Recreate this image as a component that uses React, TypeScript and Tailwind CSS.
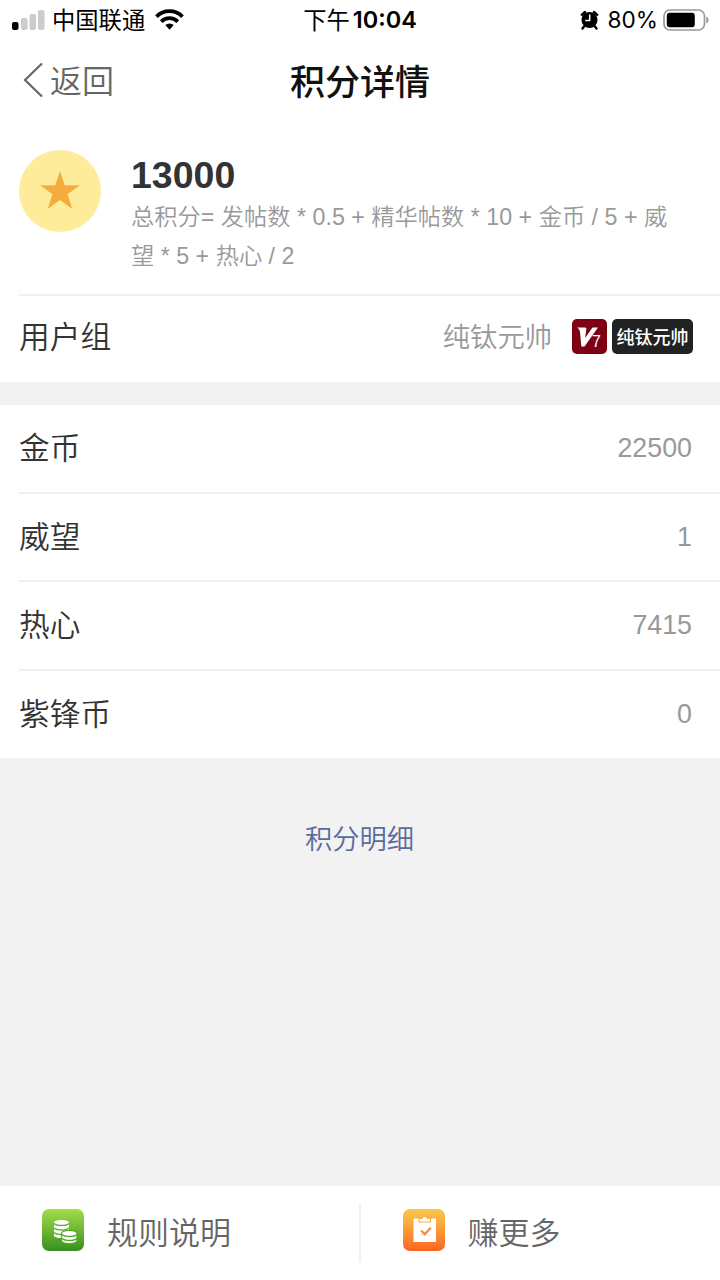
import type { ReactNode } from "react";

const balances = [
  { label: "金币", value: 22500 },
  { label: "威望", value: 1 },
  { label: "热心", value: 7415 },
  { label: "紫锋币", value: 0 },
];

export default function App() {
  return (
    <div className="flex h-[1280px] w-[720px] flex-col overflow-hidden bg-[#f2f2f2] font-['Liberation_Sans','Noto_Sans_CJK_SC',sans-serif] font-[350] text-[#333]">
      <div className="bg-white">
        <StatusBar />
        <NavBar />
        <PointsSummary />
        <UserGroupRow />
      </div>

      <div className="mt-[23px] bg-white">
        {balances.map((item, i) => (
          <div key={item.label} className="pl-[19px]">
            <div
              className={
                i < balances.length - 1
                  ? "flex h-[88.7px] items-center justify-between border-b-2 border-[#f0f0f0] pr-7"
                  : "flex h-[86.9px] items-center justify-between pr-7"
              }
            >
              <span className="pt-[2px] text-[30.7px] leading-none">{item.label}</span>
              <span className="text-[26.8px] leading-none text-[#999]">{item.value}</span>
            </div>
          </div>
        ))}
      </div>

      <div className="flex flex-1 justify-center pr-px pt-[62px]">
        <a className="h-10 text-[27.3px] leading-10 text-[#586c9c]">积分明细</a>
      </div>

      <footer className="flex h-[94px] items-center bg-white">
        <FooterButton label="规则说明">
          <CoinsIcon />
        </FooterButton>
        <div className="-ml-px h-[58px] w-[2px] bg-[#f0f0f0]" />
        <FooterButton label="赚更多">
          <TaskIcon />
        </FooterButton>
      </footer>
    </div>
  );
}

function StatusBar() {
  return (
    <div className="grid h-10 grid-cols-3 items-center pl-3 pr-[11px] text-black">
      <div className="flex items-center">
        <svg width="33" height="20" viewBox="0 0 33 20">
          <rect x="0" y="12" width="6.5" height="8" rx="2" fill="#000" />
          <rect x="9" y="8" width="6.5" height="12" rx="2" fill="#ccc" />
          <rect x="17.5" y="4" width="6.5" height="16" rx="2" fill="#ccc" />
          <rect x="26" y="0" width="6.5" height="20" rx="2" fill="#ccc" />
        </svg>
        <span className="ml-[7px] whitespace-nowrap pt-[3px] text-[23.3px] font-normal leading-none">中国联通</span>
        <svg className="ml-[10px]" width="29" height="21" viewBox="0 0 29 21">
          <g fill="none" stroke="#000" strokeWidth="3.8">
            <path d="M1.5 7.6a18.4 18.4 0 0 1 26 0" />
            <path d="M6.2 12.6a11.8 11.8 0 0 1 16.6 0" />
          </g>
          <path d="M10.3 16.1a6.2 6.2 0 0 1 8.4 0L14.5 20.7z" fill="#000" />
        </svg>
      </div>
      <div className="flex items-center justify-center whitespace-nowrap pr-px leading-none">
        <span className="pt-[3px] text-[23.3px] font-normal">下午</span>
        <span className="ml-[3px] font-['Inter',sans-serif] text-[23.5px] font-semibold">10:04</span>
      </div>
      <div className="flex items-center justify-end">
        <svg width="19" height="20" viewBox="0 0 19 20">
          <circle cx="9.5" cy="10" r="8" />
          <path d="M1.8 4.8 5 2M17.2 4.8 14 2M4 16.5l-1.5 2M15 16.5l1.5 2" stroke="#000" strokeWidth="2.4" strokeLinecap="round" />
          <path d="M9.7 4.5v6H5.2" fill="none" stroke="#fff" strokeWidth="1.5" />
        </svg>
        <span className="ml-[9px] font-['Inter',sans-serif] text-[22.6px] font-normal leading-none">80%</span>
        <svg className="ml-[5px]" width="46" height="22" viewBox="0 0 46 22">
          <rect x="1" y="1" width="40.5" height="20" rx="6" fill="none" stroke="#999" strokeWidth="1.7" />
          <rect x="3.8" y="3.8" width="28" height="14.4" rx="3" />
          <path d="M43.3 7.5c3 1.2 3 5.8 0 7z" fill="#999" />
        </svg>
      </div>
    </div>
  );
}

function NavBar() {
  return (
    <div className="grid h-20 grid-cols-3 items-center px-[22px]">
      <div className="flex items-center text-[#666]">
        <svg width="22" height="36" viewBox="0 0 22 36" fill="none" stroke="currentColor" strokeWidth="2.2">
          <path d="M20 1.5 3 18l17 16.5" />
        </svg>
        <span className="ml-[6px] pt-[3px] text-[32px] leading-none">返回</span>
      </div>
      <h1 className="pt-1 text-center text-[35px] font-medium leading-none text-[#111]">积分详情</h1>
    </div>
  );
}

function PointsSummary() {
  return (
    <div className="pl-[19px]">
      <div className="flex h-44 items-start border-b-2 border-[#f0f0f0] pt-[30px]">
        <div className="flex size-[82px] shrink-0 items-center justify-center rounded-full bg-[#feec9b] pb-[3px]">
          <svg width="40" height="38" viewBox="0 0 40 38" fill="#f4ad3d">
            <path d="M20 0l4.7 14.3H40l-12.4 9L32.3 38 20 29 7.7 38l4.7-14.7L0 14.3h15.3z" />
          </svg>
        </div>
        <div className="ml-[30px] pt-1">
          <div className="text-[37.5px] font-bold leading-[43px]">13000</div>
          <p className="whitespace-nowrap pt-px text-[23.25px] leading-[38.5px] text-[#999]">
            总积分= 发帖数 * 0.5 + 精华帖数 * 10 + 金币 / 5 + 威
            <br />望 * 5 + 热心 / 2
          </p>
        </div>
      </div>
    </div>
  );
}

function UserGroupRow() {
  return (
    <div className="flex h-[86px] items-center pb-[6px] pl-[19px] pr-[27px]">
      <span className="pt-1 text-[30.7px] leading-none">用户组</span>
      <span className="ml-auto pt-1 text-[27.3px] leading-none text-[#999]">纯钛元帅</span>
      <div className="ml-5 size-[35px] rounded-[5px] bg-[#7d0014]">
        <svg width="35" height="35" viewBox="0 0 35 35" fill="#fff">
          <path d="M5 8.5h8c1.3 0 1.5.8 1.3 2.100l-1.200 8.400L20.500 8.500h5.500L12.500 27.500H9.300L8 13C7.700 10.500 6.500 9.500 5 8.500z" />
          <text x="20" y="28" fontSize="16" fontFamily="Liberation Sans">7</text>
        </svg>
      </div>
      <div className="ml-[5px] flex h-[35px] w-[81px] items-center justify-center whitespace-nowrap rounded-[5px] bg-[#202322] pt-[3px] text-[18px] font-medium leading-none text-white">
        纯钛元帅
      </div>
    </div>
  );
}

function FooterButton({ label, children }: { label: string; children: ReactNode }) {
  return (
    <div className="flex flex-1 items-center pb-[6px] pl-[42px]">
      {children}
      <span className="ml-[23px] pt-[7px] text-[31px] leading-none text-[#666]">{label}</span>
    </div>
  );
}

function CoinsIcon() {
  return (
    <div className="size-[42px] rounded-[7px] bg-linear-to-b from-[#a3dd4b] to-[#36901e]">
      <svg width="42" height="42" viewBox="0 0 42 42" fill="none">
        <path d="M12 13.5c0-3.5 15-3.5 15 0v13c0 3.500-15 3.500-15 0z" fill="#fff" />
        <path d="M12 14.5c3 2.700 12 2.700 15 0M12 19c3 2.700 12 2.700 15 0M12 23.500c3 2.700 12 2.700 15 0" stroke="#61b52c" strokeWidth="1.5" />
        <path d="M19.5 24.5c0-4.300 15.500-4.300 15.500 0v7c0 4-15.500 4-15.500 0z" fill="#fff" stroke="#55a928" strokeWidth="1.2" />
        <path d="M20 25.5c3 2.700 12 2.700 15 0M20 29.500c3 2.700 12 2.700 15 0" stroke="#55a928" strokeWidth="1.5" />
      </svg>
    </div>
  );
}

function TaskIcon() {
  return (
    <div className="size-[42px] rounded-[7px] bg-linear-to-b from-[#f9c84c] to-[#fa641f]">
      <svg width="42" height="42" viewBox="0 0 42 42" fill="none">
        <path d="M10.5 9.500h22.500v23.500H10.500z" fill="#fff" />
        <path d="M16 9.500h3c.5-2.700 5-2.700 5.500 0h3v3.500H16z" fill="#fff" stroke="#fab044" strokeWidth="1.2" />
        <path d="m18.2 21.500 3.500 3.700 6-6.500" stroke="#f98d35" strokeWidth="2.3" />
      </svg>
    </div>
  );
}
